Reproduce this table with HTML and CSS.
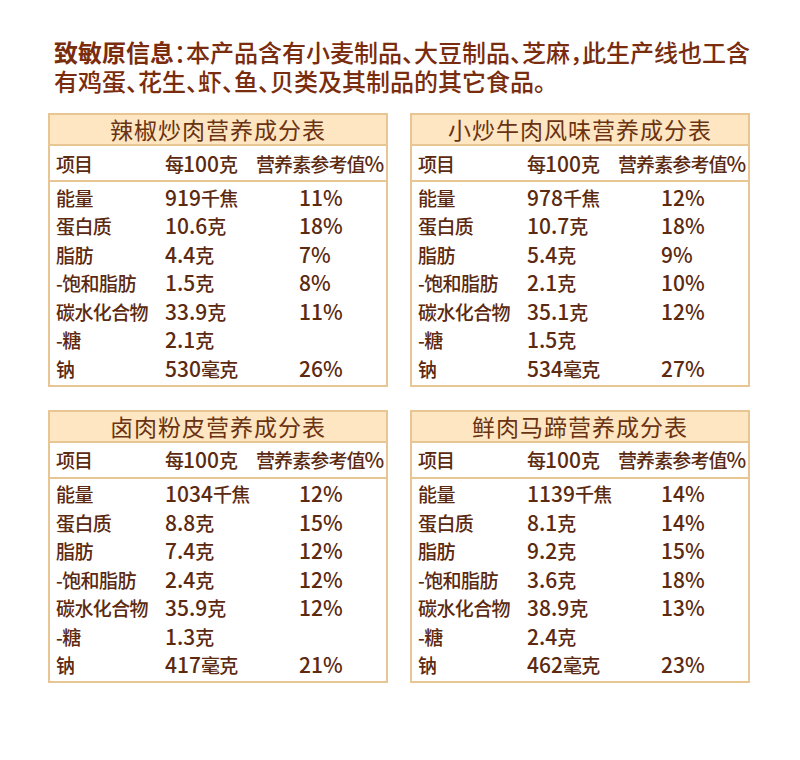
FILE: index.html
```html
<!DOCTYPE html>
<html lang="zh-CN">
<head>
<meta charset="utf-8">
<title>营养成分表</title>
<link rel="stylesheet" href="styles.css">
</head>
<body>
<div class="page">
  <p class="intro"><b>致敏原信息</b>：本产品含有小麦制品、大豆制品、芝麻，此生产线也工含有鸡蛋、花生、虾、鱼、贝类及其制品的其它食品。</p>
  <div class="grid">
    <div class="table">
      <div class="title">辣椒炒肉营养成分表</div>
      <div class="head"><span>项目</span><span>每<i class="n">100</i>克</span><span>营养素参考值<i class="n">%</i></span></div>
      <div class="body">
        <div class="row"><span>能量</span><span><i class="n">919</i>千焦</span><span class="n">11%</span></div>
        <div class="row"><span>蛋白质</span><span><i class="n">10.6</i>克</span><span class="n">18%</span></div>
        <div class="row"><span>脂肪</span><span><i class="n">4.4</i>克</span><span class="n">7%</span></div>
        <div class="row"><span>-饱和脂肪</span><span><i class="n">1.5</i>克</span><span class="n">8%</span></div>
        <div class="row"><span>碳水化合物</span><span><i class="n">33.9</i>克</span><span class="n">11%</span></div>
        <div class="row"><span>-糖</span><span><i class="n">2.1</i>克</span><span></span></div>
        <div class="row"><span>钠</span><span><i class="n">530</i>毫克</span><span class="n">26%</span></div>
      </div>
    </div>
    <div class="table">
      <div class="title">小炒牛肉风味营养成分表</div>
      <div class="head"><span>项目</span><span>每<i class="n">100</i>克</span><span>营养素参考值<i class="n">%</i></span></div>
      <div class="body">
        <div class="row"><span>能量</span><span><i class="n">978</i>千焦</span><span class="n">12%</span></div>
        <div class="row"><span>蛋白质</span><span><i class="n">10.7</i>克</span><span class="n">18%</span></div>
        <div class="row"><span>脂肪</span><span><i class="n">5.4</i>克</span><span class="n">9%</span></div>
        <div class="row"><span>-饱和脂肪</span><span><i class="n">2.1</i>克</span><span class="n">10%</span></div>
        <div class="row"><span>碳水化合物</span><span><i class="n">35.1</i>克</span><span class="n">12%</span></div>
        <div class="row"><span>-糖</span><span><i class="n">1.5</i>克</span><span></span></div>
        <div class="row"><span>钠</span><span><i class="n">534</i>毫克</span><span class="n">27%</span></div>
      </div>
    </div>
    <div class="table">
      <div class="title">卤肉粉皮营养成分表</div>
      <div class="head"><span>项目</span><span>每<i class="n">100</i>克</span><span>营养素参考值<i class="n">%</i></span></div>
      <div class="body">
        <div class="row"><span>能量</span><span><i class="n">1034</i>千焦</span><span class="n">12%</span></div>
        <div class="row"><span>蛋白质</span><span><i class="n">8.8</i>克</span><span class="n">15%</span></div>
        <div class="row"><span>脂肪</span><span><i class="n">7.4</i>克</span><span class="n">12%</span></div>
        <div class="row"><span>-饱和脂肪</span><span><i class="n">2.4</i>克</span><span class="n">12%</span></div>
        <div class="row"><span>碳水化合物</span><span><i class="n">35.9</i>克</span><span class="n">12%</span></div>
        <div class="row"><span>-糖</span><span><i class="n">1.3</i>克</span><span></span></div>
        <div class="row"><span>钠</span><span><i class="n">417</i>毫克</span><span class="n">21%</span></div>
      </div>
    </div>
    <div class="table">
      <div class="title">鲜肉马蹄营养成分表</div>
      <div class="head"><span>项目</span><span>每<i class="n">100</i>克</span><span>营养素参考值<i class="n">%</i></span></div>
      <div class="body">
        <div class="row"><span>能量</span><span><i class="n">1139</i>千焦</span><span class="n">14%</span></div>
        <div class="row"><span>蛋白质</span><span><i class="n">8.1</i>克</span><span class="n">14%</span></div>
        <div class="row"><span>脂肪</span><span><i class="n">9.2</i>克</span><span class="n">15%</span></div>
        <div class="row"><span>-饱和脂肪</span><span><i class="n">3.6</i>克</span><span class="n">18%</span></div>
        <div class="row"><span>碳水化合物</span><span><i class="n">38.9</i>克</span><span class="n">13%</span></div>
        <div class="row"><span>-糖</span><span><i class="n">2.4</i>克</span><span></span></div>
        <div class="row"><span>钠</span><span><i class="n">462</i>毫克</span><span class="n">23%</span></div>
      </div>
    </div>
  </div>
</div>
</body>
</html>
```

FILE: styles.css
```css
html, body {
  margin: 0;
  padding: 0;
  background: #ffffff;
}

body {
  font-family: "Noto Sans CJK SC", "Noto Sans", sans-serif;
  color: #5c2a10;
}

.page {
  width: 800px;
  height: 760px;
  padding-top: 37px;
  box-sizing: border-box;
}

.intro {
  margin: 0 0 0 54px;
  width: 712px;
  font-size: 24px;
  line-height: 29px;
  font-weight: 500;
  color: #7a2d0e;
  font-feature-settings: "halt";
}

.intro b {
  font-weight: 700;
}

.grid {
  margin: 18px 0 0 48px;
  display: grid;
  grid-template-columns: 340px 340px;
  column-gap: 22px;
  row-gap: 23px;
}

.table {
  border: 2px solid #e8c694;
  background: #ffffff;
}

.title {
  height: 29px;
  line-height: 29px;
  background: #fde6c1;
  text-align: center;
  font-size: 23px;
  letter-spacing: 1px;
  color: #6a3313;
  border-bottom: 2px solid #e8c694;
}

.head {
  height: 34px;
  display: grid;
  grid-template-columns: 109px 91px 1fr;
  align-items: center;
  padding-left: 6px;
  font-size: 19px;
  letter-spacing: -0.9px;
  font-weight: 500;
  white-space: nowrap;
  border-bottom: 2px solid #e8c694;
}

.body {
  padding: 1px 0 2px 0;
}

.row {
  height: 28.5px;
  display: grid;
  grid-template-columns: 109px 134px 1fr;
  align-items: center;
  padding-left: 6px;
  font-size: 19px;
  letter-spacing: -0.6px;
  font-weight: 500;
  white-space: nowrap;
}

.n {
  font-style: normal;
  font-size: 21px;
  letter-spacing: 0;
  line-height: 1;
}
```
